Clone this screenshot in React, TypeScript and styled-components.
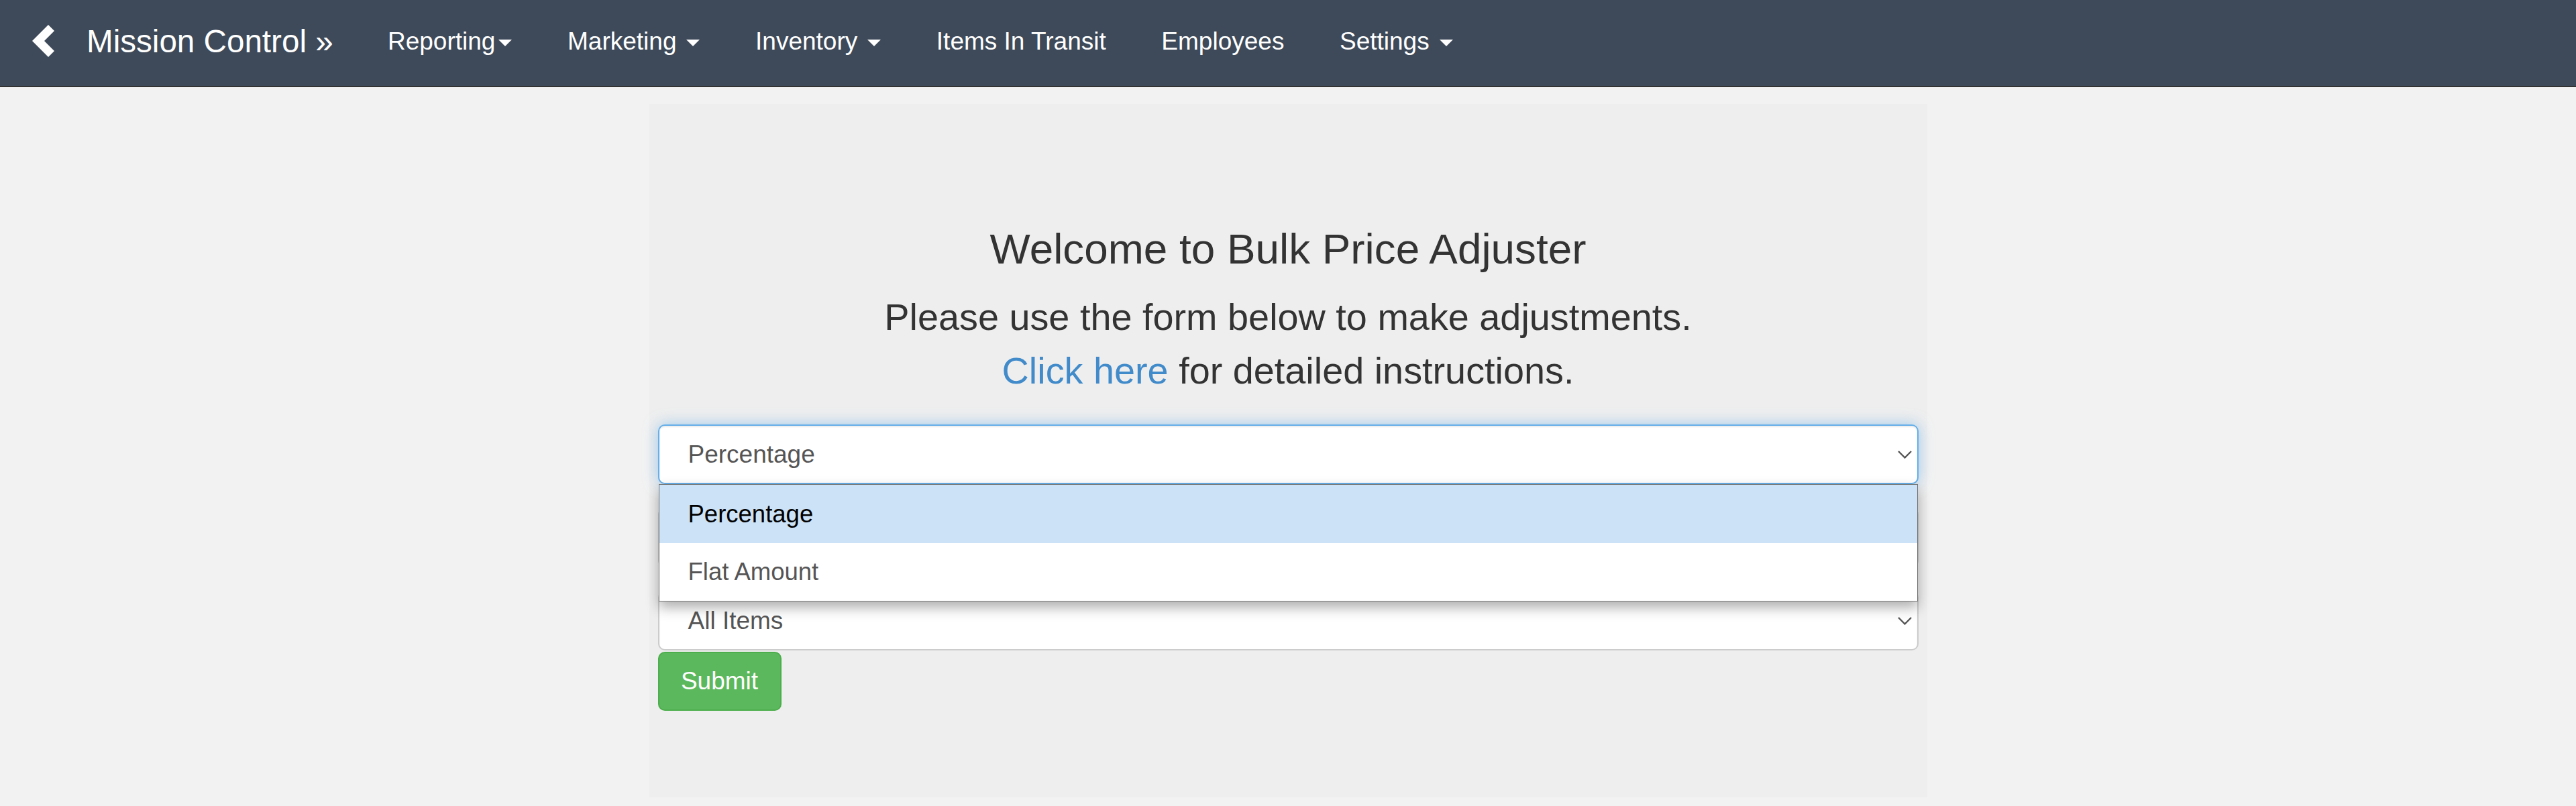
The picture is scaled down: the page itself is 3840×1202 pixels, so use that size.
import React from "react";
import styled, { createGlobalStyle } from "styled-components";

const GlobalStyle = createGlobalStyle`
  html, body {
    margin: 0;
    padding: 0;
    background: #f2f2f2;
    font-family: "Liberation Sans", Arial, Helvetica, sans-serif;
    color: #333;
  }
  * { box-sizing: border-box; }
`;

const Navbar = styled.nav`
  display: flex;
  align-items: flex-start;
  height: 130px;
  padding-left: 47px;
  background: #3e4a59;
  border-bottom: 2px solid #333;
`;

const BackIcon = styled.svg`
  flex: none;
  width: 34px;
  height: 48px;
  margin-top: 37px;
`;

const Brand = styled.a`
  margin-left: 48px;
  padding: 36px 40px 0 0;
  font-size: 47.6px;
  line-height: 52px;
  color: #fff;
  text-decoration: none;
  white-space: nowrap;
`;

const NavList = styled.ul`
  display: flex;
  margin: 0;
  padding: 0;
  list-style: none;
`;

const NavLink = styled.a`
  display: block;
  padding: 36px 41.3px 0;
  font-size: 37px;
  line-height: 52px;
  color: #fff;
  text-decoration: none;
  white-space: nowrap;
`;

const Caret = styled.span<{ $spaced?: boolean }>`
  display: inline-block;
  width: 0;
  height: 0;
  margin-left: ${(p) => (p.$spaced ? "15px" : "5px")};
  vertical-align: middle;
  border-top: 10px solid #fff;
  border-left: 10px solid transparent;
  border-right: 10px solid transparent;
`;

const Panel = styled.main`
  width: 1905px;
  margin: 25px auto 0;
  padding: 182px 13px 129px;
  background: #eeeeee;
`;

const Title = styled.h3`
  margin: 0;
  font-size: 63.8px;
  line-height: 69px;
  font-weight: 400;
  text-align: center;
  color: #333;
`;

const Lead = styled.p`
  margin: 27px 0 40px;
  font-size: 55.8px;
  line-height: 80px;
  text-align: center;
  color: #333;
`;

const Link = styled.a`
  color: #428bca;
  text-decoration: none;
`;

const Form = styled.form`
  display: flex;
  flex-direction: column;
`;

const SelectWrap = styled.div`
  position: relative;
`;

const SelectBox = styled.div<{ $focused?: boolean }>`
  display: flex;
  align-items: center;
  justify-content: space-between;
  height: 89px;
  padding: 0 6px 0 43px;
  background: #fff;
  border: 2px solid ${(p) => (p.$focused ? "#66afe9" : "#cccccc")};
  border-radius: 10px;
  font-size: 37px;
  color: #555;
  box-shadow: ${(p) =>
    p.$focused
      ? "inset 0 2px 2px rgba(0,0,0,.075), 0 0 21px rgba(102,175,233,.6)"
      : "inset 0 2px 2px rgba(0,0,0,.075)"};
`;

const Chevron = styled.svg`
  flex: none;
  width: 21px;
  height: 12px;
  margin-right: 2px;
`;

const AmountInput = styled.div`
  height: 89px;
  margin: 35px 0;
  background: #fff;
  border: 2px solid #ccc;
  border-radius: 10px;
`;

const Popup = styled.ul`
  position: absolute;
  top: 100%;
  left: 1px;
  right: 1px;
  z-index: 10;
  margin: 0;
  padding: 0;
  list-style: none;
  background: #fff;
  border: 1px solid #767676;
  box-shadow: 0 9px 18px rgba(0, 0, 0, 0.32);
`;

const Option = styled.li<{ $active?: boolean; $h: number }>`
  display: flex;
  align-items: center;
  height: ${(p) => p.$h}px;
  padding-left: 43px;
  font-size: 36.5px;
  background: ${(p) => (p.$active ? "#cce2f7" : "#fff")};
  color: ${(p) => (p.$active ? "#000" : "#555")};
`;

const SubmitButton = styled.button`
  align-self: flex-start;
  width: 184px;
  height: 88px;
  margin-top: 2px;
  padding: 0;
  font-family: inherit;
  font-size: 37px;
  color: #fff;
  background: #5cb85c;
  border: 2px solid #4cae4c;
  border-radius: 10px;
`;

const ChevronDown = () => (
  <Chevron viewBox="0 0 21 12">
    <path d="M1 1 L10.5 10.5 L20 1" fill="none" stroke="#555" strokeWidth="2.4" />
  </Chevron>
);

const navItems: { label: string; caret?: "tight" | "spaced" }[] = [
  { label: "Reporting", caret: "tight" },
  { label: "Marketing", caret: "spaced" },
  { label: "Inventory", caret: "spaced" },
  { label: "Items In Transit" },
  { label: "Employees" },
  { label: "Settings", caret: "spaced" },
];

export default function App() {
  return (
    <>
      <GlobalStyle />
      <Navbar>
        <BackIcon viewBox="0 0 34 48">
          <polygon points="1,24 25,0 34,9 19,24 34,39 25,48" fill="#fff" />
        </BackIcon>
        <Brand href="#">Mission Control »</Brand>
        <NavList>
          {navItems.map((item) => (
            <li key={item.label}>
              <NavLink href="#">
                {item.label}
                {item.caret && <Caret $spaced={item.caret === "spaced"} />}
              </NavLink>
            </li>
          ))}
        </NavList>
      </Navbar>
      <Panel>
        <Title>Welcome to Bulk Price Adjuster</Title>
        <Lead>
          Please use the form below to make adjustments.
          <br />
          <Link href="#">Click here</Link> for detailed instructions.
        </Lead>
        <Form>
          <SelectWrap>
            <SelectBox $focused role="combobox">
              <span>Percentage</span>
              <ChevronDown />
            </SelectBox>
            <Popup role="listbox">
              <Option $active $h={87}>Percentage</Option>
              <Option $h={86}>Flat Amount</Option>
            </Popup>
          </SelectWrap>
          <AmountInput />
          <SelectWrap>
            <SelectBox role="combobox">
              <span>All Items</span>
              <ChevronDown />
            </SelectBox>
          </SelectWrap>
          <SubmitButton type="button">Submit</SubmitButton>
        </Form>
      </Panel>
    </>
  );
}
